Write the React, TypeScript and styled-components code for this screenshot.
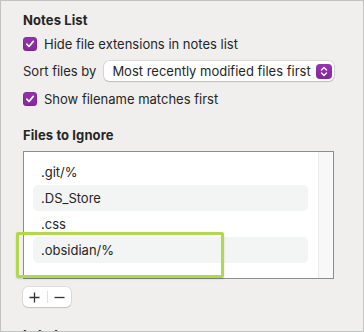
import styled, { createGlobalStyle } from 'styled-components';

const Global = createGlobalStyle`
  html, body {
    margin: 0;
    padding: 0;
    background: #f0efed;
  }
  body {
    font-family: Inter, "Noto Sans", sans-serif;
    color: #262626;
  }
`;

const Frame = styled.div`
  box-sizing: border-box;
  width: 364px;
  height: 332px;
  border: 1px solid #c2c2c0;
  background: #f0efed;
  overflow: hidden;
  padding: 10px 0 0 22px;
  display: flex;
  flex-direction: column;

  & > * {
    flex-shrink: 0;
  }
`;

const SectionTitle = styled.div<{ $top?: number }>`
  font-size: 13px;
  font-weight: 700;
  line-height: 18px;
  margin-top: ${(p) => p.$top ?? 0}px;
  letter-spacing: 0.1px;
`;

const Row = styled.div<{ $top: number }>`
  display: flex;
  align-items: center;
  gap: 7px;
  height: 20px;
  margin-top: ${(p) => p.$top}px;
  font-size: 13px;
`;

const Box = styled.span`
  width: 14px;
  height: 14px;
  border-radius: 3.5px;
  background: linear-gradient(#9433ad, #84279d);
  display: flex;
  align-items: center;
  justify-content: center;
  box-shadow: inset 0 0 0 0.5px rgba(0, 0, 0, 0.15);
`;

const SelectBox = styled.div`
  box-sizing: border-box;
  width: 230px;
  height: 20px;
  margin-left: 1px;
  background: #fff;
  border-radius: 5px;
  box-shadow: 0 0 0 0.5px rgba(0, 0, 0, 0.18), 0 1px 1.5px rgba(0, 0, 0, 0.12);
  display: flex;
  align-items: center;
  justify-content: space-between;
  padding: 0 2px 0 8px;
  font-size: 13px;
`;

const Stepper = styled.span`
  width: 16px;
  height: 15px;
  border-radius: 4px;
  background: linear-gradient(#9536ae, #83269c);
  display: flex;
  align-items: center;
  justify-content: center;
`;

const ListWrap = styled.div`
  position: relative;
  margin-top: 7px;
  width: 311px;
`;

const List = styled.div`
  box-sizing: border-box;
  height: 128px;
  border: 1px solid #8c8c8a;
  background: #fff;
  display: flex;
`;

const Rows = styled.div`
  flex: 1;
  padding: 7px 10px 0 9px;
`;

const Item = styled.div<{ $alt?: boolean }>`
  height: 26px;
  display: flex;
  align-items: center;
  padding-left: 8px;
  border-radius: 5px;
  font-size: 13px;
  background: ${(p) => (p.$alt ? '#f3f4f4' : 'transparent')};
`;

const Track = styled.div`
  width: 14px;
  background: #f8f8f8;
  border-left: 1px solid #e9e9e9;
`;

const Highlight = styled.div`
  position: absolute;
  left: -7px;
  top: 81px;
  width: 208px;
  height: 46px;
  box-sizing: border-box;
  border: 3px solid #b2d84e;
  border-radius: 2px;
  box-shadow: 0 1px 2px rgba(0, 0, 0, 0.15);
`;

const Buttons = styled.div`
  margin-top: 8px;
  width: 48px;
  height: 20px;
  background: #fff;
  border-radius: 5px;
  box-shadow: 0 0 0 0.5px rgba(0, 0, 0, 0.15), 0 1px 1.5px rgba(0, 0, 0, 0.12);
  display: flex;
  align-items: center;
`;

const Btn = styled.span<{ $divider?: boolean }>`
  flex: 1;
  height: 12px;
  display: flex;
  align-items: center;
  justify-content: center;
  border-left: ${(p) => (p.$divider ? '1px solid #e2e2e2' : 'none')};
`;

function Check() {
  return (
    <Box>
      <svg width="10" height="10" viewBox="0 0 10 10">
        <path d="M1.8 5.2 L4 7.5 L8.3 2.4" fill="none" stroke="#fff" strokeWidth="1.7" strokeLinecap="round" strokeLinejoin="round" />
      </svg>
    </Box>
  );
}

const files = ['.git/%', '.DS_Store', '.css', '.obsidian/%'];

export default function App() {
  return (
    <>
      <Global />
      <Frame>
        <SectionTitle>Notes List</SectionTitle>
        <Row $top={5}>
          <Check />
          <span>Hide file extensions in notes list</span>
        </Row>
        <Row $top={7}>
          <span>Sort files by</span>
          <SelectBox>
            <span>Most recently modified files first</span>
            <Stepper>
              <svg width="8" height="11" viewBox="0 0 8 11">
                <path d="M1.5 4 L4 1.5 L6.5 4 M1.5 7 L4 9.5 L6.5 7" fill="none" stroke="#fff" strokeWidth="1.4" strokeLinecap="round" strokeLinejoin="round" />
              </svg>
            </Stepper>
          </SelectBox>
        </Row>
        <Row $top={8}>
          <Check />
          <span>Show filename matches first</span>
        </Row>
        <SectionTitle $top={17}>Files to Ignore</SectionTitle>
        <ListWrap>
          <List>
            <Rows>
              {files.map((f, i) => (
                <Item key={f} $alt={i % 2 === 1}>
                  {f}
                </Item>
              ))}
            </Rows>
            <Track />
          </List>
          <Highlight />
        </ListWrap>
        <Buttons>
          <Btn>
            <svg width="11" height="11" viewBox="0 0 11 11">
              <path d="M5.5 0.5 V10.5 M0.5 5.5 H10.5" stroke="#333" strokeWidth="1.3" />
            </svg>
          </Btn>
          <Btn $divider>
            <svg width="11" height="11" viewBox="0 0 11 11">
              <path d="M0.5 5.5 H10.5" stroke="#333" strokeWidth="1.3" />
            </svg>
          </Btn>
        </Buttons>
        <SectionTitle $top={19}>Labels</SectionTitle>
      </Frame>
    </>
  );
}
